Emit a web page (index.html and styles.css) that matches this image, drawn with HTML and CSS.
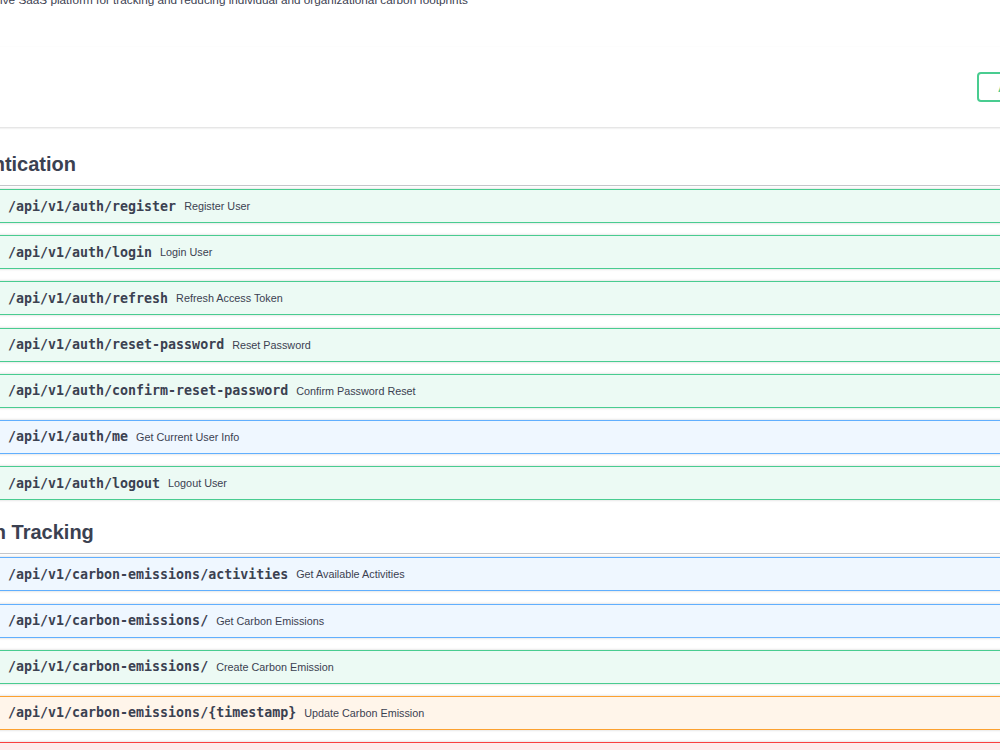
FILE: index.html
```html
<!DOCTYPE html>
<html>
  <head>
    <meta charset="utf-8" />
    <title>Carbon Footprint API - Swagger UI</title>
    <link rel="stylesheet" href="styles.css">
  </head>
  <body>
    <div class="page">
      <div class="info">
        <p class="description">A comprehensive SaaS platform for tracking and reducing individual and organizational carbon footprints</p>
      </div>

      <div class="scheme-container">
        <div class="auth-wrapper">
          <button class="btn-authorize">
            <span>Authorize</span>
            <svg width="14" height="16" viewBox="0 0 20 20" aria-hidden="true">
              <path fill="#49cc90" d="M15.8 8H14V5.6C14 2.703 12.665 1 10 1 7.334 1 6 2.703 6 5.6V6h2v-.801C8 3.754 8.797 3 10 3c1.203 0 2 .754 2 2.199V8H4c-.553 0-1 .646-1 1.199V17c0 .549.428 1.139.951 1.307l1.197.387C5.672 18.861 6.550 19 7.100 19h5.8c.549 0 1.428-.139 1.951-.307l1.196-.387c.524-.167.953-.757.953-1.306V9.199C17 8.646 16.352 8 15.8 8z"/>
            </svg>
          </button>
        </div>
      </div>

      <section class="tag-section">
        <h3 class="opblock-tag">Authentication</h3>
        <div class="opblock post"><span class="method">POST</span><span class="path">/api/v1/auth/register</span><span class="summary">Register User</span></div>
        <div class="opblock post"><span class="method">POST</span><span class="path">/api/v1/auth/login</span><span class="summary">Login User</span></div>
        <div class="opblock post"><span class="method">POST</span><span class="path">/api/v1/auth/refresh</span><span class="summary">Refresh Access Token</span></div>
        <div class="opblock post"><span class="method">POST</span><span class="path">/api/v1/auth/reset-password</span><span class="summary">Reset Password</span></div>
        <div class="opblock post"><span class="method">POST</span><span class="path">/api/v1/auth/confirm-reset-password</span><span class="summary">Confirm Password Reset</span></div>
        <div class="opblock get"><span class="method">GET</span><span class="path">/api/v1/auth/me</span><span class="summary">Get Current User Info</span></div>
        <div class="opblock post"><span class="method">POST</span><span class="path">/api/v1/auth/logout</span><span class="summary">Logout User</span></div>
      </section>

      <section class="tag-section">
        <h3 class="opblock-tag">Carbon Tracking</h3>
        <div class="opblock get"><span class="method">GET</span><span class="path">/api/v1/carbon-emissions/activities</span><span class="summary">Get Available Activities</span></div>
        <div class="opblock get"><span class="method">GET</span><span class="path">/api/v1/carbon-emissions/</span><span class="summary">Get Carbon Emissions</span></div>
        <div class="opblock post"><span class="method">POST</span><span class="path">/api/v1/carbon-emissions/</span><span class="summary">Create Carbon Emission</span></div>
        <div class="opblock put"><span class="method">PUT</span><span class="path">/api/v1/carbon-emissions/{timestamp}</span><span class="summary">Update Carbon Emission</span></div>
        <div class="opblock delete"><span class="method">DELETE</span><span class="path">/api/v1/carbon-emissions/{timestamp}</span><span class="summary">Delete Carbon Emission</span></div>
      </section>
    </div>
  </body>
</html>
```

FILE: styles.css
```css
body {
  margin: 0;
  overflow: hidden;
  background: #fff;
  color: #3b4151;
  font-family: "Liberation Sans", Arial, sans-serif;
}
.page {
  width: 1180px;
  margin-left: -72px;
}
.description {
  margin: -8px 0 0 -3px;
  font-size: 11.75px;
  line-height: 15px;
}
.scheme-container {
  margin: 40px 0 17px;
  padding: 25px 0;
  background: #fff;
  box-shadow: 0 1px 2px 0 rgba(0, 0, 0, 0.15);
}
.auth-wrapper {
  display: flex;
  justify-content: flex-end;
  padding-right: 11px;
}
.btn-authorize {
  display: flex;
  align-items: center;
  gap: 8px;
  box-sizing: border-box;
  width: 120px;
  height: 30px;
  padding: 0 8px 0 19px;
  border: 2px solid #49cc90;
  border-radius: 4px;
  background: transparent;
  color: #49cc90;
  font-family: "Liberation Sans", Arial, sans-serif;
  font-size: 11.7px;
  font-weight: 700;
}
.opblock-tag {
  margin: 0 0 3px;
  padding: 8px 17px 8px 8px;
  font-size: 20px;
  line-height: 25px;
  font-weight: 700;
  border-bottom: 1px solid rgba(59, 65, 81, 0.3);
}
.opblock {
  display: flex;
  align-items: center;
  box-sizing: border-box;
  height: 34px;
  margin-bottom: 12.2px;
  padding: 0 4px;
  border: 1px solid #49cc90;
  border-radius: 4px;
  box-shadow: 0 0 3px rgba(0, 0, 0, 0.19);
}
.method {
  box-sizing: border-box;
  width: 67px;
  padding: 5px 0;
  border-radius: 3px;
  color: #fff;
  text-align: center;
  font-size: 11.7px;
  font-weight: 700;
  line-height: 14px;
}
.path {
  padding: 0 8px;
  font-family: "DejaVu Sans Mono", monospace;
  font-size: 13.3px;
  font-weight: 700;
}
.summary {
  font-size: 10.8px;
}
.post {
  background: rgba(73, 204, 144, 0.1);
  border-color: #49cc90;
}
.post .method {
  background: #49cc90;
}
.get {
  background: rgba(97, 175, 254, 0.1);
  border-color: #61affe;
}
.get .method {
  background: #61affe;
}
.put {
  background: rgba(252, 161, 48, 0.1);
  border-color: #fca130;
}
.put .method {
  background: #fca130;
}
.delete {
  background: rgba(249, 62, 62, 0.1);
  border-color: #f93e3e;
}
.delete .method {
  background: #f93e3e;
}
```
